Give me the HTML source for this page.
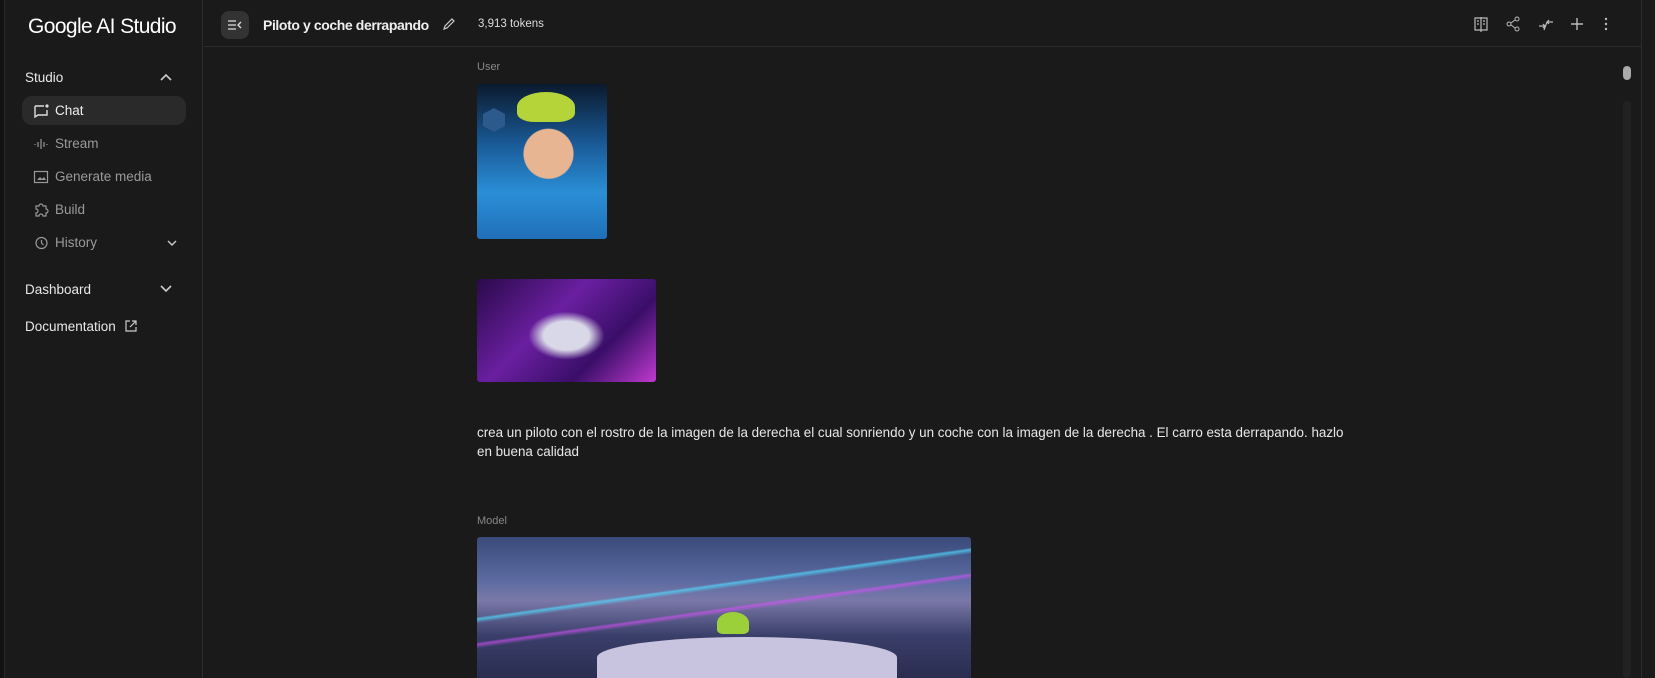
<!DOCTYPE html>
<html><head><meta charset="utf-8"><style>
*{box-sizing:border-box;margin:0;padding:0}
body{width:1655px;height:678px;overflow:hidden;background:#1a1a1a;font-family:"Liberation Sans",sans-serif;color:#e3e3e3;position:relative}
.strip{position:absolute;left:0;top:0;width:5px;height:678px;background:#111;border-right:1px solid #2a2a2a}
.side{position:absolute;left:5px;top:0;width:198px;height:678px;background:#1a1a1a;border-right:1px solid #2c2c2c}
.logo{position:absolute;left:23px;top:15px;font-size:21px;color:#fff;letter-spacing:-0.6px}
.sec{position:absolute;left:20px;font-size:13.5px;color:#e8e8e8}
.item{position:absolute;left:17px;width:164px;height:29px;border-radius:10px;font-size:13.5px;color:#9a9a9a;padding-left:33px;line-height:29px}
.item.act{background:#2a2a2a;color:#eee}
.item svg{position:absolute;left:11px;top:7px}
.top{position:absolute;left:204px;top:0;right:14px;height:47px;border-bottom:1px solid #2c2c2c}
.btn{position:absolute;left:17px;top:11px;width:28px;height:28px;border-radius:8px;background:#333}
.title{position:absolute;left:59px;top:17px;font-size:14px;font-weight:bold;color:#eee;letter-spacing:-0.4px}
.tok{position:absolute;left:274px;top:18px;font-size:11.5px;color:#ddd}
.ic{position:absolute;top:16px}
.lab{position:absolute;left:477px;font-size:11px;color:#888}
.rb{position:absolute;left:1641px;top:0;width:1px;height:678px;background:#2c2c2c}
</style></head><body>
<div class="strip"></div>
<div class="side">
<div class="logo">Google AI Studio</div>
<div class="sec" style="top:70px">Studio</div>
<svg style="position:absolute;left:155px;top:73px" width="12" height="8"><path d="M1 7l5-5 5 5" stroke="#ccc" stroke-width="1.6" fill="none"/></svg>
<div class="item act" style="top:96px"><svg width="16" height="16"><path d="M2 3h9M2 3v11l3-2h9V7" stroke="#ddd" stroke-width="1.4" fill="none"/><circle cx="14" cy="3" r="1.6" fill="#ddd"/></svg>Chat</div>
<div class="item" style="top:129px"><svg width="16" height="16"><path d="M2 8v1M5 6v5M8 3v10M11 6v5M14 8v1" stroke="#999" stroke-width="1.2"/></svg>Stream</div>
<div class="item" style="top:162px"><svg width="16" height="16"><rect x="1.5" y="2.5" width="13" height="11" fill="none" stroke="#999" stroke-width="1.2"/><path d="M4 11l3-3 2 2 2-2 2 3z" fill="#999"/></svg>Generate media</div>
<div class="item" style="top:195px"><svg width="16" height="16"><path d="M3 4h3a2 2 0 014 0h3v3a2 2 0 010 4v3H10a2 2 0 00-4 0H3v-3a2 2 0 000-4z" stroke="#999" stroke-width="1.2" fill="none"/></svg>Build</div>
<div class="item" style="top:228px"><svg width="16" height="16"><circle cx="8.5" cy="8" r="5.5" stroke="#999" stroke-width="1.2" fill="none"/><path d="M8.5 5v3l2 2" stroke="#999" stroke-width="1.2" fill="none"/></svg>History</div>
<svg style="position:absolute;left:162px;top:240px" width="10" height="7"><path d="M1 1l4 4 4-4" stroke="#ccc" stroke-width="1.4" fill="none"/></svg>
<div class="sec" style="top:282px">Dashboard</div>
<svg style="position:absolute;left:155px;top:285px" width="12" height="8"><path d="M1 1l5 5 5-5" stroke="#ccc" stroke-width="1.6" fill="none"/></svg>
<div class="sec" style="top:319px">Documentation</div>
<svg style="position:absolute;left:120px;top:320px" width="12" height="12"><path d="M5 1H1v10h10V7M7 1h4v4M11 1L5 7" stroke="#ccc" stroke-width="1.2" fill="none"/></svg>
</div>
<div class="top">
<div class="btn"><svg style="position:absolute;left:7px;top:9px" width="14" height="10"><path d="M0 1h8M0 5h8M0 9h8M13 2l-3 3 3 3" stroke="#ddd" stroke-width="1.3" fill="none"/></svg></div>
<div class="title">Piloto y coche derrapando</div>
<svg style="position:absolute;left:238px;top:18px" width="13" height="13"><path d="M2 11l1-3 7-7 2 2-7 7z" stroke="#ccc" stroke-width="1.2" fill="none"/></svg>
<div class="tok">3,913 tokens</div>
<svg class="ic" style="left:1270px" width="14" height="16"><path d="M1 2h12v12H1zM7 1v15M3 5h2M3 8h2M9 5h2M9 8h2" stroke="#bbb" stroke-width="1.2" fill="none"/></svg>
<svg class="ic" style="left:1302px" width="14" height="16"><circle cx="11" cy="3" r="2" stroke="#bbb" fill="none"/><circle cx="3" cy="8" r="2" stroke="#bbb" fill="none"/><circle cx="11" cy="13" r="2" stroke="#bbb" fill="none"/><path d="M5 7l4-3M5 9l4 3" stroke="#bbb"/></svg>
<svg class="ic" style="left:1334px" width="16" height="16"><path d="M1 10h6M5 8l2 2-2 2M15 6H9M11 4L9 6l2 2M6 14l3-8" stroke="#bbb" stroke-width="1.2" fill="none"/></svg>
<svg class="ic" style="left:1367px" width="12" height="16"><path d="M6 2v12M0 8h12" stroke="#bbb" stroke-width="1.4"/></svg>
<svg class="ic" style="left:1399px" width="6" height="16"><circle cx="3" cy="3" r="1.2" fill="#bbb"/><circle cx="3" cy="8" r="1.2" fill="#bbb"/><circle cx="3" cy="13" r="1.2" fill="#bbb"/></svg>
</div>
<div style="position:absolute;left:1623px;top:66px;width:8px;height:14px;border-radius:4px;background:#aaa"></div>
<div style="position:absolute;left:1623px;top:101px;width:8px;height:577px;border-radius:4px;background:#222"></div>
<div class="rb"></div>
<div class="lab" style="top:61px">User</div>
<div style="position:absolute;left:477px;top:84px;width:130px;height:155px;border-radius:3px;background:radial-gradient(circle at 55% 45%,#e8b592 0 22%,transparent 23%),linear-gradient(180deg,#0b1a2e 0,#1a5c9a 40%,#2a8fd6 70%,#1f6fb8 100%)"><div style="position:absolute;left:40px;top:8px;width:58px;height:30px;border-radius:50% 50% 30% 30%;background:#b5d43a"></div><div style="position:absolute;left:6px;top:24px;width:22px;height:24px;background:#2c5a8c;clip-path:polygon(50% 0,100% 25%,100% 75%,50% 100%,0 75%,0 25%)"></div></div>
<div style="position:absolute;left:477px;top:279px;width:179px;height:103px;border-radius:3px;background:radial-gradient(ellipse at 50% 55%,#d8d8e8 0 18%,transparent 30%),linear-gradient(135deg,#2a0a4a,#6a1fa0 40%,#3a0e68 70%,#c03ad0)"></div>
<div style="position:absolute;left:477px;top:423px;font-size:13.4px;line-height:19px;color:#e8e8e8;width:880px">crea un piloto con el rostro de la imagen de la derecha el cual sonriendo y un coche con la imagen de la derecha . El carro esta derrapando. hazlo<br>en buena calidad</div>
<div class="lab" style="top:515px">Model</div>
<div style="position:absolute;left:477px;top:537px;width:494px;height:141px;border-radius:3px 3px 0 0;background:linear-gradient(172deg,transparent 0 38%,rgba(80,220,255,.7) 39%,transparent 41%,transparent 50%,rgba(220,80,255,.6) 51%,transparent 53%),linear-gradient(180deg,#3a4a7a 0,#5a6aa0 30%,#7a78a8 45%,#3a3f6a 70%,#2a2d50 100%)"><div style="position:absolute;left:240px;top:75px;width:32px;height:22px;border-radius:50% 50% 20% 20%;background:#9cd03a"></div><div style="position:absolute;left:120px;top:100px;width:300px;height:41px;border-radius:50% 50% 0 0;background:#c8c4e0"></div></div>
</body></html>
